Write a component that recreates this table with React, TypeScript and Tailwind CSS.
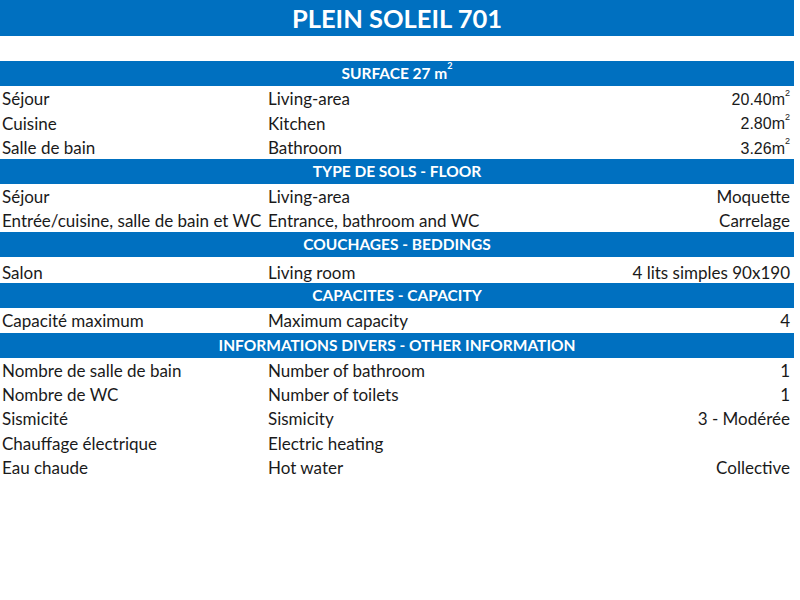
const font = { fontFamily: "Lato, 'Noto Sans', sans-serif" };

type Row = { fr: string; en: string; val?: React.ReactNode; h?: string };

function M2({ v }: { v: string }) {
  return (
    <span className="font-['Liberation_Sans',Arial,sans-serif] text-[16px]">
      {v}m<sup className="text-[9px] align-[5px]">2</sup>
    </span>
  );
}

function Header({ children }: { children: React.ReactNode }) {
  return (
    <div className="h-[25px] bg-[#0070c0] text-white font-bold text-[15.5px] flex items-center justify-center">
      {children}
    </div>
  );
}

function Line({ fr, en, val, h = "h-[24.3px]" }: Row) {
  return (
    <div className={`${h} grid grid-cols-[268px_1fr_auto] items-center text-[17px] text-[#1a1a1a]`}>
      <span className="pl-[2px] whitespace-nowrap">{fr}</span>
      <span className="whitespace-nowrap">{en}</span>
      <span className="pr-[4px] whitespace-nowrap text-right">{val}</span>
    </div>
  );
}

export default function App() {
  return (
    <div className="w-[800px] h-[600px] bg-white" style={font}>
      <div className="w-[794px]">
        <div className="h-[36px] bg-[#0070c0] text-white font-bold text-[25.5px] flex items-center justify-center">
          PLEIN SOLEIL 701
        </div>
        <div className="h-[25px]" />
        <Header>
          <span>
            SURFACE 27 m<sup className="text-[9px] align-[5px]">2</sup>
          </span>
        </Header>
        <Line fr="Séjour" en="Living-area" val={<M2 v="20.40" />} />
        <Line fr="Cuisine" en="Kitchen" val={<M2 v="2.80" />} />
        <Line fr="Salle de bain" en="Bathroom" val={<M2 v="3.26" />} />
        <Header>TYPE DE SOLS - FLOOR</Header>
        <Line fr="Séjour" en="Living-area" val="Moquette" />
        <Line fr="Entrée/cuisine, salle de bain et WC" en="Entrance, bathroom and WC" val="Carrelage" />
        <Header>COUCHAGES - BEDDINGS</Header>
        <Line fr="Salon" en="Living room" val="4 lits simples 90x190" h="h-[26px] pt-[3px]" />
        <Header>CAPACITES - CAPACITY</Header>
        <Line fr="Capacité maximum" en="Maximum capacity" val="4" />
        <Header>INFORMATIONS DIVERS - OTHER INFORMATION</Header>
        <Line fr="Nombre de salle de bain" en="Number of bathroom" val="1" />
        <Line fr="Nombre de WC" en="Number of toilets" val="1" />
        <Line fr="Sismicité" en="Sismicity" val="3 - Modérée" />
        <Line fr="Chauffage électrique" en="Electric heating" val="" />
        <Line fr="Eau chaude" en="Hot water" val="Collective" />
      </div>
    </div>
  );
}
